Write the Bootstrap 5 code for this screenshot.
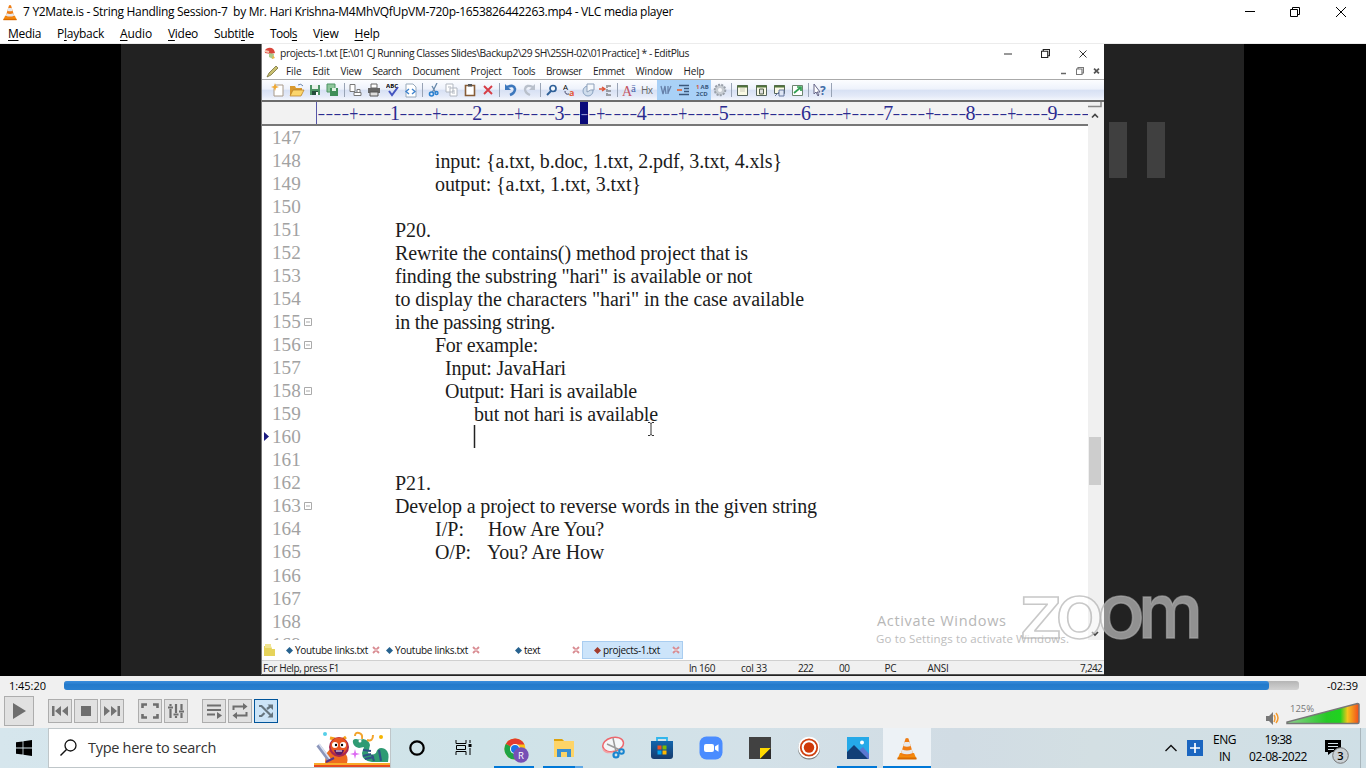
<!DOCTYPE html>
<html lang="en">
<head>
<meta charset="utf-8">
<title>VLC media player</title>
<link href="https://cdn.jsdelivr.net/npm/bootstrap@5.3.0/dist/css/bootstrap.min.css" rel="stylesheet">
<style>
body{width:1366px;height:768px;overflow:hidden;font-family:"Open Sans","Noto Sans",sans-serif;font-size:12px;line-height:1;color:#000;background:#fff}
svg{display:block;flex:none}
[data-w]{white-space:pre;display:inline-block;flex:none}
.titlebar{height:24px;padding-left:3px;padding-right:19px}
.appmenu{height:20px;gap:16px;padding-left:8px;border-bottom:1px solid #ececec}
.appmenu u,.appmenu span{text-underline-offset:2px}
.video{height:632px;background:#000}
.stage{width:1123px;margin-left:121px;background:#222;position:relative;padding-left:140px}
.editor{width:843px;height:631px;background:#fff;border-left:1px solid #777;color:#222;overflow:hidden}
.e-title{height:19px;padding:0 16px 0 2px;font-size:10.3px}
.e-menu{height:17px;padding:0 4px 0 4px;font-size:10px;gap:11px;border-bottom:1px solid #aaa}
.e-tools{height:22px;padding-left:6px;background:linear-gradient(#fcfdff 0,#eef2fb 45%,#d8e1f4 52%,#e4eaf8 80%,#f3f6fc 100%);border-bottom:2px solid #6c6c6c}
.cell{width:18.2px;height:20px;display:flex;align-items:center;justify-content:center;flex:none}
.cell.first{width:20px}
.cell.on{background:#a9d1f7}
.sep{width:4.6px;flex:none;display:flex;justify-content:center}
.sep::before{content:"";width:1px;height:14px;background:#98a3b5}
.e-ruler{height:24px;background:#f2f2f2;width:826px;padding-left:54px;border-bottom:2px solid #777;overflow:hidden;font-family:"Liberation Serif",serif;color:#2b2b90;font-size:20px}
.e-ruler i{font-style:normal;width:8.225px;height:22px;flex:none;display:flex;align-items:center;justify-content:center}
.e-ruler i.dash span{transform:scale(1.15,.75)}
.e-ruler i.plus span{transform:scale(.8,1.15)}
.e-ruler i.cur{background:#0b0b7a;color:#8f8fd0}
.origin{border-left:1px solid #5656a8;height:22px}
.doc{width:826px;height:514px;overflow:hidden;font-family:"Liberation Serif",serif;font-size:20px;color:#1c1c1c}
.line-row{height:23.04px;position:relative}
.lnum{width:42px;padding-left:10px;color:#a2a2a2;flex:none;font-size:19.2px}
.foldbox{width:91px;flex:none}
.scrollcol{width:16px;background:#f0f0f0}
.tabs{height:20px;font-size:10px;color:#111}
.tab-on{background:#cce4fa;border:1px solid #a9cdf0;height:18px}
.status{height:15px;background:#f0f0f0;border-top:1px solid #d0d0d0;font-size:10px;border-bottom:1px solid #555}
.pausemark{position:absolute;left:988px;top:78px;gap:20px}
.pausemark b{width:18px;height:56px;background:#404040}
.over{position:absolute}
.ctl{height:52px;background:#f0f0f0}
.seek{height:9px;width:1235px;border-radius:3px;background:linear-gradient(#b5b5b5,#d2d2d2)}
.seekfill{height:9px;width:1205px;border-radius:3px;background:linear-gradient(#3a8ddd,#247acb 40%,#2a80d0)}
.vbtn{width:24px;height:24px;border:1px solid #adadad;background:#e1e1e1;display:flex;align-items:center;justify-content:center;flex:none}
.vbtn.big{width:30px;height:30px}
.vbtn.sel{border-color:#00549a;background:#cce4f7}
.taskbar{height:40px;background:linear-gradient(90deg,#d6e6ed 0,#cfe3e8 35%,#d3e1e8 55%,#d1dce4 70%,#d3dfe3 80%,#cfdfe6 100%)}
.searchbox{width:343px;height:40px;background:#fff;border:1px solid #bfc6c9;font-size:14.5px;color:#333;margin-right:1px}
.searchbox span{padding-top:1px}
.task{width:49px;height:40px;flex:none;position:relative;display:flex;align-items:center;justify-content:center}
.task.run::after{content:"";position:absolute;bottom:0;left:4px;width:40px;height:2px;background:#0078d7}
.task.dual::after{background:linear-gradient(90deg,#0078d7 80%,#5ea8e6 80%)}
.task.now{background:#edf2f6;width:48px;margin-left:1px}
.task.now::after{left:0;width:48px}
</style>
</head>
<body class="d-flex flex-column">
<svg width="0" height="0" class="over"><defs>
 <symbol id="cone" viewBox="0 0 20 23"><path d="M3 16h14l2.500 6H.5z" fill="#f58a0b"/><path d="M.5 20.500h19V22.500H.5z" fill="#d96a00"/><path d="M8.500 1.500Q10 .3 11.500 1.500L16.300 17.500Q10 20.500 3.700 17.500z" fill="#ef7d14"/><path d="M7.500 5h5l1.200 4q-3.700 1.500-7.400 0zM5.200 12.500q4.800 2 9.600 0l1 3.500q-5.800 2.500-11.600 0z" fill="#e8e8ea"/></symbol>
 <symbol id="winl" viewBox="0 0 10 10"><path d="M1.500 1.500l7 7M8.500 1.500l-7 7" stroke="currentColor" fill="none"/></symbol>
 <symbol id="rest" viewBox="0 0 10 10"><path d="M.5 2.500h7v7h-7zM2.500 2.500v-2h7v7h-2" stroke="currentColor" fill="none"/></symbol>
 <symbol id="tabx" viewBox="0 0 8 8"><path d="M1 1l6 6M7 1L1 7" stroke="#d98c92" stroke-width="1.800" fill="none"/><path d="M0 4h8" stroke="#fff" stroke-width=".7"/></symbol>
</defs></svg>

<header class="titlebar d-flex align-items-center">
 <svg width="14" height="17"><use href="#cone"/></svg>
 <span data-w="650" style="margin-left:6px">7 Y2Mate.is - String Handling Session-7  by Mr. Hari Krishna-M4MhVQfUpVM-720p-1653826442263.mp4 - VLC media player</span>
 <div class="ms-auto d-flex align-items-center" style="gap:35px">
  <svg width="10" height="10"><path d="M0 4.500h10" stroke="#000"/></svg>
  <svg width="10" height="10"><use href="#rest"/></svg>
  <svg width="12" height="12"><path d="M1 1l10 10M11 1L1 11" stroke="#000" fill="none"/></svg>
 </div>
</header>
<nav class="appmenu d-flex align-items-center">
 <span data-w="33"><u>M</u>edia</span><span data-w="47">P<u>l</u>ayback</span><span data-w="32"><u>A</u>udio</span><span data-w="30"><u>V</u>ideo</span><span data-w="40">Subti<u>t</u>le</span><span data-w="27">Tool<u>s</u></span><span data-w="25.500">V<u>i</u>ew</span><span data-w="25"><u>H</u>elp</span>
</nav>

<main class="video d-flex">
 <div class="stage">
  <div class="editor d-flex flex-column">
   <div class="e-title d-flex align-items-center">
    <svg width="12" height="13" viewBox="0 0 12 13"><path d="M1 6q-1-4 3-5 6-1 7 5l-4 1z" fill="#d9463c"/><path d="M1 4l4 1" stroke="#f6c9b4" stroke-width="2"/><path d="M5 6l5 1-1 5-4-2z" fill="#a8c98c"/><path d="M9 8l2 3-3 1" fill="#e8b84c"/></svg>
    <span data-w="409" style="margin-left:4px">projects-1.txt [E:\01 CJ Running Classes Slides\Backup2\29 SH\25SH-02\01Practice] * - EditPlus</span>
    <div class="ms-auto d-flex" style="gap:28px"><svg width="9" height="9"><path d="M0 5h8" stroke="#333"/></svg><svg width="9" height="9" viewBox="0 0 10 10" color="#222" stroke-width="1.300"><use href="#rest"/></svg><svg width="10" height="10" color="#333"><use href="#winl"/></svg></div>
   </div>
   <div class="e-menu d-flex align-items-center">
    <svg width="13" height="13" viewBox="0 0 13 13" style="margin-right:-4px"><path d="M1 12l2-4 7-7 2 2-7 7z" fill="#c9bf70" stroke="#77713c" stroke-width=".8"/></svg>
    <span data-w="15.500">File</span><span data-w="17">Edit</span><span data-w="21">View</span><span data-w="29">Search</span><span data-w="47">Document</span><span data-w="31">Project</span><span data-w="22.500">Tools</span><span data-w="36">Browser</span><span data-w="31.500">Emmet</span><span data-w="37">Window</span><span data-w="21">Help</span>
    <div class="ms-auto d-flex align-items-center" style="gap:9px"><svg width="7" height="8"><path d="M1 6.500h5" stroke="#666" stroke-width="1.500"/></svg><svg width="8" height="8" viewBox="0 0 10 10" color="#777" stroke-width="1.500"><use href="#rest"/></svg><svg width="7" height="8" viewBox="0 0 10 10" color="#555" stroke-width="2.500"><use href="#winl"/></svg></div>
   </div>
   <div class="e-tools d-flex align-items-center">
    <div class="cell first"><svg width="16" height="16"><path d="M5 3h8v11H4V7z" fill="#fff" stroke="#a89a8a"/><path d="M5 1l1 3 3 1-3 1-1 3-1-3-3-1 3-1z" fill="#f0a830"/></svg></div>
    <div class="cell"><svg width="16" height="16"><path d="M1 13V4h5l1 2h6v7z" fill="#d9992e"/><path d="M1 14l3-6h11l-3 6z" fill="#fbd56c" stroke="#b67d22" stroke-width=".7"/><path d="M9 3q3-2 5 1" stroke="#6a84aa" fill="none"/></svg></div>
    <div class="cell"><svg width="14" height="14"><path d="M2 2h10v10H2z" fill="#4d9465"/><path d="M4 2h6v4H4z" fill="#e9f3ea"/><path d="M4 8h6v4H4z" fill="#244d3c"/><path d="M8 9h2v3H8z" fill="#fff"/></svg></div>
    <div class="cell"><svg width="14" height="14"><path d="M1 1h8v8H1z" fill="#8fc69b" stroke="#4f9464"/><path d="M4 5h8v8H4z" fill="#3e8e58"/><path d="M6 5h4v3H6z" fill="#dff0e2"/></svg></div>
    <div class="sep"></div>
    <div class="cell"><svg width="14" height="14" fill="#fff" stroke="#777"><path d="M1 1.500h5v7H1zM5 9.500h7v3H5zM8 6.500h3v3H8z"/></svg></div>
    <div class="cell"><svg width="14" height="14"><path d="M4 1h6v4H4z" fill="#fff" stroke="#666"/><path d="M1 5h12v5H1z" fill="#666"/><path d="M3 9h8v4H3z" fill="#ddd" stroke="#555"/></svg></div>
    <div class="cell"><svg width="14" height="16"><text x="0" y="6" font-size="6" font-weight="700" textLength="12">ABC</text><path d="M3 9l3 4 6-8" stroke="#4455c0" stroke-width="2" fill="none"/></svg></div>
    <div class="cell"><svg width="13" height="15"><path d="M2 1h7l3 3v10H2z" fill="#fff" stroke="#9ab"/><path d="M5 6L2 8.500 5 11M8 6l3 2.500L8 11" stroke="#3e83ce" stroke-width="1.400" fill="none"/></svg></div>
    <div class="sep"></div>
    <div class="cell"><svg width="12" height="14"><path d="M9 0L4 10M4 3l4 7" stroke="#68a" stroke-width="1.300"/><circle cx="3.500" cy="11" r="2" fill="none" stroke="#2a80d0" stroke-width="1.600"/><circle cx="8.500" cy="10" r="1.500" fill="none" stroke="#2a80d0" stroke-width="1.400"/></svg></div>
    <div class="cell"><svg width="13" height="14" fill="#fff" stroke="#b1b7c0"><path d="M1 1h7v8H1zM5 5h7v8H5zM7 8h3M7 10h3M3 4h3"/></svg></div>
    <div class="cell"><svg width="12" height="14"><path d="M1.500 2.500h9v10h-9z" fill="#fff" stroke="#875c36" stroke-width="1.600"/><path d="M4 1h4v2.500H4z" fill="#555"/></svg></div>
    <div class="cell"><svg width="12" height="12"><path d="M2 2l8 8M10 2l-8 8" stroke="#d73c45" stroke-width="1.900"/></svg></div>
    <div class="sep"></div>
    <div class="cell"><svg width="13" height="14"><path d="M3 4q7-3 8 2 0 4-5 6" stroke="#3d78bd" stroke-width="2.600" fill="none"/><path d="M1 1v6h6z" fill="#3d78bd"/></svg></div>
    <div class="cell"><svg width="13" height="14"><path d="M10 4Q3 1 2 6q0 4 5 6" stroke="#b9c0cb" stroke-width="2.400" fill="none"/><path d="M12 1v6H6z" fill="#b9c0cb"/></svg></div>
    <div class="sep"></div>
    <div class="cell"><svg width="13" height="14"><circle cx="8" cy="5.500" r="3" fill="#f4f9ff" stroke="#2f6098" stroke-width="1.700"/><path d="M6 8l-4 4" stroke="#2f6098" stroke-width="2"/></svg></div>
    <div class="cell"><svg width="14" height="18"><text x="0" y="9" font-size="8">A</text><text x="6" y="15" font-size="9" font-weight="700" fill="#e25b3c">a</text><path d="M2 10q0 4 4 3" stroke="#446" fill="none"/></svg></div>
    <div class="cell"><svg width="13" height="15"><circle cx="6" cy="8" r="5" fill="#cfdded" stroke="#8aa2c0"/><path d="M5 1h7v6q-3-1-7 2z" fill="#f5f8fc" stroke="#8da0ba"/></svg></div>
    <div class="cell"><svg width="14" height="14"><path d="M0 6h5M3 4l3 2-3 2" stroke="#de5538" stroke-width="1.400" fill="none"/><path d="M8 2v11M9 3h4M9 8h4M9 12h4" stroke="#555" stroke-dasharray="3 1"/></svg></div>
    <div class="sep"></div>
    <div class="cell"><svg width="15" height="16" font-family="Liberation Serif,serif"><text x="0" y="14" font-size="14" fill="#c55465">A</text><text x="9" y="10" font-size="11" fill="#4860a8">ā</text></svg></div>
    <div class="cell"><svg width="13" height="14"><text x="0" y="11" font-size="10" textLength="12" fill="#666">Hx</text></svg></div>
    <div class="cell on"><svg width="12" height="14"><path d="M1 3l2 8 2-8 1 8M8 3v8M11 3l-3 7" stroke="#6681aa" stroke-width="1.300" fill="none"/></svg></div>
    <div class="cell on"><svg width="14" height="14"><path d="M2 2.500h10M7 5.500h5M7 8.500h5M2 11.500h10" stroke="#3c587c" stroke-width="1.400"/><path d="M0 7h5" stroke="#e86331" stroke-width="1.600"/></svg></div>
    <div class="cell on"><svg width="13" height="16" font-size="6" font-weight="700" fill="#36567a"><text x="0" y="7" fill="#d05a45">1</text><text x="4.500" y="7">AB</text><text x="0" y="14">2CD</text></svg></div>
    <div class="cell"><svg width="14" height="14"><circle cx="7" cy="7" r="5.300" fill="#c7ccd2" stroke="#9aa1aa" stroke-width="2" stroke-dasharray="2 1.200"/><circle cx="7" cy="7" r="2" fill="#f5f7fa"/></svg></div>
    <div class="sep"></div>
    <div class="cell"><svg width="13" height="13"><path d="M1.500 1.500h10v10h-10z" fill="#fafae4" stroke="#56645c"/><path d="M1 2.500h11" stroke="#51733b" stroke-width="2"/><path d="M4 5h5M4 7h5" stroke="#ccb"/></svg></div>
    <div class="cell"><svg width="13" height="13"><path d="M1.500 1.500h10v10h-10z" fill="#fafae4" stroke="#56645c"/><path d="M1 2.500h11" stroke="#51733b" stroke-width="2"/><path d="M4.500 5h4v5h-4z" fill="#ddd" stroke="#51604a"/></svg></div>
    <div class="cell"><svg width="13" height="13"><path d="M1.500 1.500h10v8h-10z" fill="#fafae4" stroke="#56645c"/><path d="M1 2.500h11" stroke="#51733b" stroke-width="2"/><path d="M6 6h5v6H6zM2 12l4-4" fill="#dfe6f4" stroke="#6678a0"/></svg></div>
    <div class="cell"><svg width="13" height="13"><path d="M1.500 1.500h10v10h-10z" fill="#fff" stroke="#6c8570"/><path d="M3 9l6-5M6 3h4v4" stroke="#30a050" stroke-width="1.700" fill="none"/></svg></div>
    <div class="sep"></div>
    <div class="cell"><svg width="14" height="15"><path d="M1 1v10l2-2 2 4 1-1-2-3h3z" fill="#fff" stroke="#668"/><text x="7" y="12" font-size="12" font-weight="700" fill="#416ca8">?</text></svg></div>
    <div class="sep"></div>
   </div>
   <div class="d-flex" style="height:538px">
    <div>
     <div class="e-ruler d-flex" id="ruler"><div class="origin"></div></div>
     <div class="doc" id="doc"></div>
    </div>
    <div class="scrollcol">
     <svg width="15" height="538"><path d="M0 4.500h13V0" stroke="#888" stroke-width="1.500" fill="none"/><path d="M4 15.500l3-3 3 3" stroke="#444" stroke-width="1.700" fill="none"/><path d="M1 335h12v48H1z" fill="#cdcdcd"/><path d="M4 530l3 3 3-3" stroke="#444" stroke-width="1.700" fill="none"/></svg>
    </div>
   </div>
   <div class="tabs d-flex align-items-center">
    <svg width="12" height="14" style="margin-left:2px"><path d="M0 3h7l1 3h3v7H0z" fill="#e6d35a"/><path d="M1 1h6v4H1z" fill="#f1e48f"/></svg>
    <svg width="7" height="7" style="margin-left:10px"><path d="M3.500 0L7 3.500 3.500 7 0 3.500z" fill="#27628f"/></svg><span data-w="73" style="margin-left:2px">Youtube links.txt</span><svg width="8" height="8" style="margin-left:4px"><use href="#tabx"/></svg>
    <svg width="7" height="7" style="margin-left:6px"><path d="M3.500 0L7 3.500 3.500 7 0 3.500z" fill="#27628f"/></svg><span data-w="73" style="margin-left:2px">Youtube links.txt</span><svg width="8" height="8" style="margin-left:4px"><use href="#tabx"/></svg>
    <svg width="7" height="7" style="margin-left:35px"><path d="M3.500 0L7 3.500 3.500 7 0 3.500z" fill="#27628f"/></svg><span data-w="16" style="margin-left:2px">text</span><svg width="8" height="8" style="margin-left:32px"><use href="#tabx"/></svg>
    <div class="tab-on d-flex align-items-center" style="width:101px;margin-left:2px;padding-left:11px">
     <svg width="7" height="7"><path d="M3.500 0L7 3.500 3.500 7 0 3.500z" fill="#a33c2c"/></svg><span data-w="57" style="margin-left:2px">projects-1.txt</span><svg width="8" height="8" style="margin-left:12px"><use href="#tabx"/></svg></div>
   </div>
   <div class="status d-flex align-items-center">
    <span data-w="76" style="margin-left:1px">For Help, press F1</span><span data-w="26" style="margin-left:350px">ln 160</span><span data-w="26" style="margin-left:26px">col 33</span><span data-w="15" style="margin-left:31px">222</span><span data-w="10.500" style="margin-left:26px">00</span><span data-w="12" style="margin-left:35px">PC</span><span data-w="21" style="margin-left:31px">ANSI</span><span data-w="22" class="ms-auto" style="margin-right:2px">7,242</span>
   </div>
  </div>
  <div class="pausemark d-flex"><b></b><b></b></div>
  <svg class="over" style="left:750px;top:510px" width="340" height="120" viewBox="871 554 340 120">
   <text x="877" y="626" font-size="14.500" fill="#b7b7b7" textLength="129">Activate Windows</text>
   <text x="876" y="643" font-size="11.500" fill="#bdbdbd" textLength="193">Go to Settings to activate Windows.</text>
   <g font-family="Inter,sans-serif" font-weight="500" font-size="76" fill="#fff" fill-opacity=".5" stroke="#aaa" stroke-opacity=".65" stroke-width="1.500"><text x="1018" y="638" textLength="46" lengthAdjust="spacingAndGlyphs">z</text><text x="1055" y="638" textLength="49" lengthAdjust="spacingAndGlyphs">o</text><text x="1097" y="638" textLength="48" lengthAdjust="spacingAndGlyphs">o</text><text x="1138" y="638" textLength="65" lengthAdjust="spacingAndGlyphs">m</text></g>
  </svg>
  <svg class="over" style="left:526px;top:377px" width="8" height="16"><path d="M1 1.500h2l1 1 1-1h2M4 2v12M1 14.500h2l1-1 1 1h2" stroke="#333" fill="none"/></svg>
 </div>
</main>

<section class="ctl">
 <div class="d-flex align-items-center" style="height:19px;padding-left:9px">
  <span data-w="37" style="margin-right:18px;font-size:11px">1:45:20</span>
  <div class="seek"><div class="seekfill"></div></div>
  <span data-w="31" style="margin-left:28px;font-size:11px">-02:39</span>
 </div>
 <div class="d-flex align-items-center" style="height:32px;padding-left:4px;color:#6e6e6e">
  <div class="vbtn big"><svg width="16" height="18"><path d="M2 1l13 8-13 8z" fill="#6e6e6e"/></svg></div>
  <div class="d-flex" style="gap:2px;margin-left:14px">
   <div class="vbtn"><svg width="16" height="12" fill="#737373"><path d="M0 1h2.500v10H0zM9 1v10L3 6zM16 1v10l-6-5z"/></svg></div>
   <div class="vbtn"><svg width="10" height="10"><path d="M0 0h10v10H0z" fill="#6e6e6e"/></svg></div>
   <div class="vbtn"><svg width="16" height="12" fill="#737373"><path d="M13.500 1H16v10h-2.500zM7 1v10l6-5zM0 1v10l6-5z"/></svg></div>
  </div>
  <div class="d-flex" style="gap:2px;margin-left:14px">
   <div class="vbtn"><svg width="18" height="16"><path d="M1.500 5V1.500H6M12 1.500h4.500V5M16.500 11v3.500H12M6 14.500H1.500V11" stroke="#6e6e6e" stroke-width="2.600" fill="none"/></svg></div>
   <div class="vbtn"><svg width="18" height="16" fill="none" stroke="#6e6e6e" stroke-width="2.200"><path d="M3.500 1v2M3.500 6v9M9 1v9M9 13v2M14.500 1v6M14.500 10v5M1 4.500h5M6.500 11.500h5M12 8.500h5"/></svg></div>
  </div>
  <div class="d-flex" style="gap:2px;margin-left:14px">
   <div class="vbtn"><svg width="16" height="16"><path d="M1 2.500h14M1 7h14M1 11.500h8" stroke="#6e6e6e" stroke-width="2"/><path d="M11 9l5 3.500-5 3.500z" fill="#6e6e6e"/></svg></div>
   <div class="vbtn"><svg width="16" height="16"><path d="M1.500 7V3.500H12M14.500 9v3.500H4" stroke="#6e6e6e" stroke-width="2" fill="none"/><path d="M11 0l4.500 3.500L11 7zM5 9L.5 12.500 5 16z" fill="#6e6e6e"/></svg></div>
   <div class="vbtn sel"><svg width="16" height="16"><path d="M1 3h2.500l9 9M1 13h2.500l3-3M9 6l4-3" stroke="#66757f" stroke-width="2.200" fill="none"/><path d="M9.500 1.500H15V7zM15 9v5.500H9.500z" fill="#66757f"/></svg></div>
  </div>
  <svg class="ms-auto" width="102" height="32" style="margin-right:1px"><path d="M3 21h3l4-4v13l-4-4H3z" fill="#777"/><path d="M11 20q2 3 0 7M13 18q4 5 0 10" stroke="#f39a2e" stroke-width="1.500" fill="none"/><text x="27" y="17" font-size="9.500" fill="#777" textLength="24">125%</text><defs><linearGradient id="vol"><stop offset="0" stop-color="#8fd08f"/><stop offset=".55" stop-color="#27c927"/><stop offset=".74" stop-color="#1fd31f"/><stop offset=".84" stop-color="#f5c51c"/><stop offset="1" stop-color="#f24a1c"/></linearGradient></defs><path d="M24 28.500V27L94.500 8.500q1.500 0 1.500 1V27q0 1.500-1.500 1.500z" fill="url(#vol)" stroke="#777" stroke-width="1.500"/></svg>
 </div>
</section>

<footer class="taskbar d-flex">
 <div class="d-flex align-items-center justify-content-center" style="width:48px"><svg width="16" height="16"><path d="M0 2.300l6.600-.9v6.200H0zM7.400 1.200L16 0v7.600H7.400zM0 8.400h6.600v6.200L0 13.700zM7.400 8.400H16V16l-8.600-1.200z"/></svg></div>
 <div class="searchbox d-flex align-items-center">
  <svg width="17" height="18" style="margin-left:11px"><circle cx="10.500" cy="6.500" r="5.500" fill="none" stroke="#111" stroke-width="1.300"/><path d="M6.500 10.500L.5 16.500" stroke="#111" stroke-width="1.500"/></svg>
  <span data-w="128" style="margin-left:11px">Type here to search</span>
  <svg class="ms-auto" width="76" height="38" viewBox="0 -1 76 38">
   <path d="M0 33h76v2H0z" fill="#f8ac2b"/><path d="M0 35h76v3H0z" fill="#e6491f"/>
   <path d="M11 33q0-13 8-15l10 3q6 5 4 12z" fill="#ed6b1f"/><path d="M16 8l5 1M32 7l-4 3" stroke="#f5a21b" stroke-width="3"/><circle cx="25" cy="17" r="10" fill="#a92750"/><circle cx="25" cy="16" r="8.500" fill="#e85422"/><circle cx="21" cy="15" r="3" fill="#fff"/><circle cx="29" cy="15" r="3" fill="#fff"/><circle cx="22" cy="15" r="1.200"/><circle cx="28" cy="15" r="1.200"/><path d="M20 20h10q-1 5-5 5t-5-5z" fill="#5a1c68"/><path d="M22 21h6" stroke="#fff"/>
   <path d="M4 15l12 16" stroke="#8b96bb" stroke-width="4"/><path d="M5 14l11 15" stroke="#dce2f2" stroke-width="1.500"/><path d="M12 32l8-4" stroke="#593486" stroke-width="2"/>
   <path d="M41 19l1 4 4 1-4 1-1 4-1-4-4-1 4-1z" fill="#dc69f2"/><circle cx="11" cy="4" r="2" fill="#56cfe8"/><circle cx="67" cy="7" r="2" fill="#f5b400"/>
   <path d="M39 13q-1-4 3-4 5 1 7 0 6 1 7 6-1 5-2 8 4 3 8 0 2-7 9-4 5 3 3 13H58q-10-1-10-9l2-6-5 1q-5-1-6-5z" fill="#2f9b73"/><path d="M41 6q0-4 4-3t3 6M53 10q6 2 6-5" stroke="#f3a42c" stroke-width="2" fill="none"/><path d="M49 20l8 1M49 26l8-2M58 25l2 6M65 20l2 11M51 29l9-2" stroke="#315187" stroke-width="2.200" fill="none"/><circle cx="46" cy="11" r="1.500" fill="#fff"/>
  </svg>
 </div>
 <div class="task"><svg width="18" height="18"><circle cx="9" cy="9" r="6.700" fill="none" stroke="#000" stroke-width="2.200"/></svg></div>
 <div class="task"><svg width="17" height="16" style="margin-left:-4px"><path d="M1 0v3.500h10V0M1 15v-3.500h10V15M1.500 5.500h9v4h-9zM15 0v3M15 8v7" stroke="#000" stroke-width="1" fill="none"/><path d="M13.500 4h3v3h-3z"/></svg></div>
 <div class="task run"><svg width="26" height="26" style="margin-top:3px;margin-left:3px"><circle cx="12" cy="12" r="10.500" fill="#fbc116"/><path d="M12 12L2.900 6.700A10.500 10.500 0 0 0 12 22.500l4-8z" fill="#1ea446"/><path d="M12 12L2.900 6.700a10.500 10.500 0 0 1 18.600.8H12z" fill="#e33b2e"/><circle cx="12" cy="12" r="5" fill="#fff"/><circle cx="12" cy="12" r="4" fill="#1a73e8"/><circle cx="18" cy="18" r="7.700" fill="#7750b5"/><text x="18" y="21.500" font-size="9.500" text-anchor="middle" fill="#fff">R</text></svg></div>
 <div class="task run dual"><svg width="22" height="20"><path d="M1 4V1h8l2 2h10v16H1z" fill="#fdd467"/><path d="M1 1h8l2 2H1z" fill="#dda20c"/><path d="M4 19v-8h14v8h-4v-5H8v5z" fill="#3a8fd1"/></svg></div>
 <div class="task"><svg width="24" height="24"><ellipse cx="12" cy="8.500" rx="10.500" ry="7" fill="#f4f6f8" stroke="#ee666c" stroke-width="1.500" transform="rotate(-14 12 8)"/><path d="M2 13q3 5 10 3" stroke="#f2a1a4" stroke-width="1.500" fill="none"/><path d="M12 2l3 14M6 8l13 6" stroke="#999" stroke-width="1.500"/><circle cx="15" cy="19" r="2.500" fill="none" stroke="#1985d0" stroke-width="2.200"/><circle cx="20.500" cy="15.500" r="2.300" fill="none" stroke="#1985d0" stroke-width="2"/></svg></div>
 <div class="task"><svg width="24" height="24"><defs><linearGradient id="st" x2="0" y2="1"><stop stop-color="#1265ad"/><stop offset="1" stop-color="#173b6c"/></linearGradient></defs><path d="M7 6V2h10v4" stroke="#31b6ec" stroke-width="1.800" fill="none"/><path d="M1 5h22v15q0 3-3 3H4q-3 0-3-3z" fill="url(#st)"/><path d="M7.500 9.500h4v4h-4z" fill="#f25022"/><path d="M12.500 9.500h4v4h-4z" fill="#7fba00"/><path d="M7.500 14.500h4v4h-4z" fill="#00a4ef"/><path d="M12.500 14.500h4v4h-4z" fill="#ffb900"/></svg></div>
 <div class="task"><svg width="24" height="24"><rect x=".5" y=".5" width="23" height="23" rx="7" fill="#4a8cff"/><rect x="5" y="8" width="10" height="8" rx="2" fill="#fff"/><path d="M16 10.500l3.500-2.300v7.600L16 13.500z" fill="#fff"/></svg></div>
 <div class="task"><svg width="22" height="22"><path d="M0 0h22v22H0z" fill="#414141"/><path d="M11 11h11L11 22z" fill="#ffd900"/><path d="M22 11v11H11z" fill="#2b2b2b"/></svg></div>
 <div class="task"><svg width="24" height="24"><circle cx="12" cy="12.500" r="11" fill="#777"/><circle cx="12" cy="11.500" r="10.800" fill="#fff"/><circle cx="12" cy="11.500" r="8.200" fill="none" stroke="#cf4111" stroke-width="1.800"/><circle cx="12" cy="11.500" r="5.200" fill="#cf3908"/></svg></div>
 <div class="task run"><svg width="22" height="22"><path d="M0 0h22v22H0z" fill="#25a9e8"/><path d="M11 14l5-4 6 7v5H11z" fill="#5b78d1"/><path d="M0 15l7-7 14 14H0z" fill="#123f77"/><circle cx="15" cy="5.500" r="2" fill="#fff"/></svg></div>
 <div class="task run now"><svg width="20" height="23"><use href="#cone"/></svg></div>
 <div class="ms-auto d-flex align-items-center" style="margin-right:1px">
  <svg width="12" height="8"><path d="M.5 7L6 1.500 11.500 7" stroke="#111" stroke-width="1.400" fill="none"/></svg>
  <svg width="16" height="16" style="margin-left:10px"><path d="M0 0h16v16H0z" fill="#1b66c0"/><path d="M8 3v10M3 8h10" stroke="#fff" stroke-width="1.700"/></svg>
  <div class="text-center d-flex flex-column align-items-center" style="gap:5px;margin-left:10px"><span data-w="23">ENG</span><span data-w="11">IN</span></div>
  <div class="d-flex flex-column align-items-center" style="gap:5px;margin-left:13px"><span data-w="27">19:38</span><span data-w="58">02-08-2022</span></div>
  <svg width="25" height="26" style="margin-left:17px;margin-top:7px"><path d="M1 1h16v12H8l-4 3v-3H1z"/><path d="M4 4.500h10M4 7.500h10M4 10.500h6" stroke="#d6e2e8"/><circle cx="16.500" cy="16.500" r="7.800" fill="#c9d0d4" stroke="#777"/><text x="16.500" y="20.500" text-anchor="middle" font-size="11" font-weight="600">3</text></svg>
  <div style="height:40px;width:5px;border-left:1px solid #a9b6bc;margin-left:11px"></div>
 </div>
</footer>

<script src="https://cdn.jsdelivr.net/npm/bootstrap@5.3.0/dist/js/bootstrap.bundle.min.js"></script>
<script>
// Column ruler: a digit every ten columns, a plus half way, the caret column filled
const ruler = document.getElementById('ruler');
for (let c = 1; c <= 94; c++) {
  const t = c % 10 === 0 ? c / 10 : c % 5 === 0 ? '+' : '-';
  ruler.insertAdjacentHTML('beforeend', `<i class="${t === '+' ? 'plus' : t === '-' ? 'dash' : ''}${c === 33 ? ' cur' : ''}"><span>${t}</span></i>`);
}
// Document lines: number -> [indent before the segment, segment width, text]
const text = {
  148: [[40, 347, 'input: {a.txt, b.doc, 1.txt, 2.pdf, 3.txt, 4.xls}']],
  149: [[40, 206, 'output: {a.txt, 1.txt, 3.txt}']],
  151: [[0, 36, 'P20.']],
  152: [[0, 353, 'Rewrite the contains() method project that is']],
  153: [[0, 357, 'finding the substring "hari" is available or not']],
  154: [[0, 409, 'to display the characters "hari" in the case available']],
  155: [[0, 160, 'in the passing string.']],
  156: [[40, 103, 'For example:']],
  157: [[50, 121, 'Input: JavaHari']],
  158: [[50, 192, 'Output: Hari is available']],
  159: [[79, 184, 'but not hari is available']],
  162: [[0, 36, 'P21.']],
  163: [[0, 422, 'Develop a project to reverse words in the given string']],
  164: [[40, 29, 'I/P:'], [24, 116, 'How Are You?']],
  165: [[40, 36, 'O/P:'], [16, 117, 'You? Are How']]
};
const folds = [155, 156, 158, 163], doc = document.getElementById('doc');
for (let n = 147; n <= 169; n++) {
  const segs = (text[n] || []).map(s => `<span data-w="${s[1]}" style="margin-left:${s[0]}px">${s[2]}</span>`).join('');
  const fold = folds.includes(n) ? '<svg width="8" height="8"><path d="M.5 .5h7v7h-7zM2 4h4" stroke="#aaa" fill="none"/></svg>' : '';
  const mark = n === 160 ? '<svg class="over" style="left:2px" width="5" height="9"><path d="M0 0l5 4.500L0 9z" fill="#1a1a80"/></svg><svg class="over" style="left:211px;top:0" width="3" height="23"><path d="M1.500 0v23" stroke="#222" stroke-width="1.500"/></svg>' : '';
  doc.insertAdjacentHTML('beforeend', `<div class="line-row d-flex align-items-center">${mark}<span class="lnum">${n}</span><span class="foldbox">${fold}</span>${segs}</div>`);
}
document.querySelectorAll('[data-w]').forEach(e => {
  e.style.letterSpacing = (e.dataset.w - e.getBoundingClientRect().width) / e.textContent.length + 'px';
});
</script>
</body>
</html>
